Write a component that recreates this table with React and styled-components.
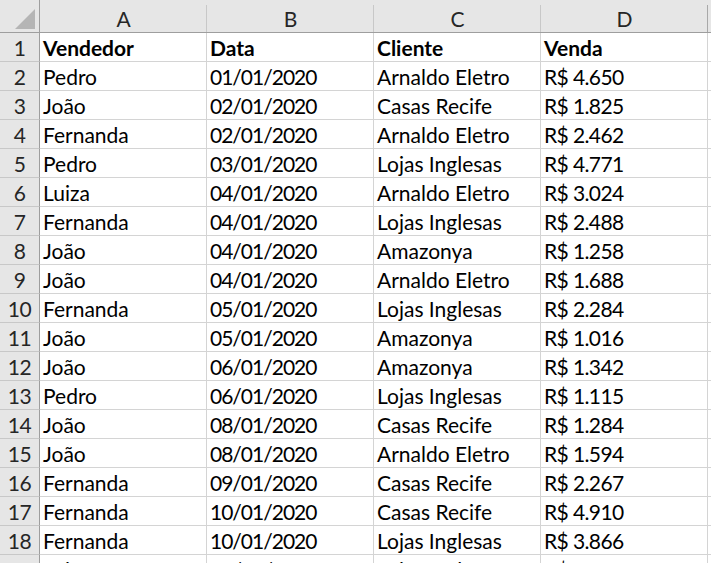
import React from "react";
import styled, { createGlobalStyle } from "styled-components";

const Global = createGlobalStyle`
  html, body { margin: 0; padding: 0; background: #ffffff; overflow: hidden; }
  body { font-family: Lato, "Liberation Sans", sans-serif; }
`;

const Sheet = styled.div`
  width: 711px;
  height: 563px;
  overflow: hidden;
  display: grid;
  grid-template-columns: 40px repeat(4, 167px) 1fr;
  grid-auto-rows: 29px;
  grid-template-rows: 33px;
  background: #ffffff;
  font-family: Lato, "Liberation Sans", sans-serif;
  font-size: 21px;
  color: #000;
`;

const Corner = styled.div`
  position: relative;
  background: #e6e6e6;
  border-right: 1px solid #9e9e9e;
  border-bottom: 1px solid #9e9e9e;
  box-sizing: border-box;
  &::before {
    content: "";
    position: absolute;
    right: 4px;
    bottom: 3px;
    width: 0;
    height: 0;
    border-left: 20px solid transparent;
    border-bottom: 20px solid #b5b5b5;
  }
`;

const ColHead = styled.div`
  position: relative;
  background: #e6e6e6;
  border-bottom: 1px solid #9e9e9e;
  box-sizing: border-box;
  display: flex;
  align-items: flex-end;
  justify-content: center;
  padding-bottom: 1px;
  color: #262626;
  font-size: 21px;
  &::after {
    content: "";
    position: absolute;
    right: 0;
    top: 5px;
    bottom: 0;
    width: 1px;
    background: ${(p) => (p.$last ? "#a8a8a8" : "#c8c8c8")};
  }
`;

const RowHead = styled.div`
  background: #e6e6e6;
  border-right: 1px solid #9e9e9e;
  border-bottom: 1px solid #c8c8c8;
  box-sizing: border-box;
  display: flex;
  align-items: flex-end;
  justify-content: center;
  color: #262626;
  line-height: 26px;
  letter-spacing: -0.5px;
`;

const Cell = styled.div`
  border-right: 1px solid #d4d4d4;
  border-bottom: 1px solid #d4d4d4;
  box-sizing: border-box;
  display: flex;
  align-items: flex-end;
  padding: 0 0 0 3px;
  white-space: nowrap;
  overflow: hidden;
  line-height: 26px;
  font-weight: ${(p) => (p.$bold ? 700 : 400)};
  letter-spacing: ${(p) => (p.$kind === "date" ? "-1px" : p.$kind === "money" ? "-0.6px" : "0")};
`;

const rows = [
  ["Vendedor", "Data", "Cliente", "Venda"],
  ["Pedro", "01/01/2020", "Arnaldo Eletro", "R$ 4.650"],
  ["João", "02/01/2020", "Casas Recife", "R$ 1.825"],
  ["Fernanda", "02/01/2020", "Arnaldo Eletro", "R$ 2.462"],
  ["Pedro", "03/01/2020", "Lojas Inglesas", "R$ 4.771"],
  ["Luiza", "04/01/2020", "Arnaldo Eletro", "R$ 3.024"],
  ["Fernanda", "04/01/2020", "Lojas Inglesas", "R$ 2.488"],
  ["João", "04/01/2020", "Amazonya", "R$ 1.258"],
  ["João", "04/01/2020", "Arnaldo Eletro", "R$ 1.688"],
  ["Fernanda", "05/01/2020", "Lojas Inglesas", "R$ 2.284"],
  ["João", "05/01/2020", "Amazonya", "R$ 1.016"],
  ["João", "06/01/2020", "Amazonya", "R$ 1.342"],
  ["Pedro", "06/01/2020", "Lojas Inglesas", "R$ 1.115"],
  ["João", "08/01/2020", "Casas Recife", "R$ 1.284"],
  ["João", "08/01/2020", "Arnaldo Eletro", "R$ 1.594"],
  ["Fernanda", "09/01/2020", "Casas Recife", "R$ 2.267"],
  ["Fernanda", "10/01/2020", "Casas Recife", "R$ 4.910"],
  ["Fernanda", "10/01/2020", "Lojas Inglesas", "R$ 3.866"],
  ["Luiza", "11/01/2020", "Lojas Inglesas", "R$ 2.120"],
];

const kinds = ["text", "date", "text", "money"];

export default function App() {
  return (
    <>
      <Global />
      <Sheet>
        <Corner />
        {["A", "B", "C", "D", "E"].map((c, i) => (
          <ColHead key={c} $last={i >= 3}>
            {i < 4 ? c : ""}
          </ColHead>
        ))}
        {rows.map((r, i) => (
          <React.Fragment key={i}>
            <RowHead>{i + 1}</RowHead>
            {r.map((v, j) => (
              <Cell key={j} $bold={i === 0} $kind={i === 0 ? "text" : kinds[j]}>
                {v}
              </Cell>
            ))}
            <Cell />
          </React.Fragment>
        ))}
      </Sheet>
    </>
  );
}
